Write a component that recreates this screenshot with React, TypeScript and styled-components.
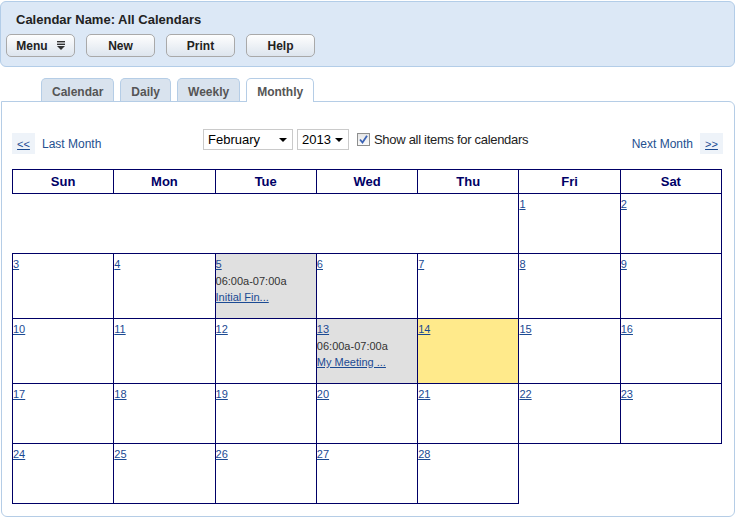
import { FC } from 'react';
import styled, { createGlobalStyle } from 'styled-components';

const GlobalStyle = createGlobalStyle`
  body {
    margin: 0;
    background: #fff;
    font-family: "Liberation Sans", Arial, sans-serif;
  }
`;

const Page = styled.div`
  width: 735px;
  padding-top: 1px;
`;

const Header = styled.div`
  border: 1px solid #b3cde8;
  border-radius: 6px;
  background: #dce8f6;
  padding: 9px 5px 9px 5px;
`;

const Title = styled.div`
  padding-left: 10px;
  font-size: 13px;
  font-weight: bold;
  line-height: 17px;
  color: #222;
`;

const ButtonRow = styled.div`
  display: flex;
  gap: 11px;
  margin-top: 6px;
`;

const Button = styled.button`
  display: flex;
  align-items: center;
  justify-content: center;
  gap: 9px;
  width: 69px;
  height: 23px;
  padding: 0;
  border: 1px solid #a9a9a9;
  border-radius: 5px;
  background: linear-gradient(#fefefe, #dde5ee);
  font-family: "Liberation Sans", Arial, sans-serif;
  font-size: 12px;
  font-weight: bold;
  color: #222;
`;

const TabRow = styled.div`
  display: flex;
  gap: 6px;
  margin-top: 11px;
  padding-left: 41px;
  position: relative;
  z-index: 1;
`;

const Tab = styled.div<{ $active?: boolean }>`
  height: ${(p) => (p.$active ? 24 : 23)}px;
  margin-bottom: ${(p) => (p.$active ? -1 : 0)}px;
  box-sizing: border-box;
  padding: 5px 10px 0;
  border: 1px solid #b5cde6;
  border-bottom: none;
  border-radius: 5px 5px 0 0;
  background: ${(p) => (p.$active ? '#fff' : '#d9e3ee')};
  font-size: 12px;
  font-weight: bold;
  line-height: 16px;
  color: #555;
`;

const Panel = styled.div`
  margin-left: 1px;
  border: 1px solid #b5cde6;
  border-radius: 0 6px 6px 6px;
  padding: 27px 11px 12px 10px;
`;

const NavRow = styled.div`
  display: grid;
  grid-template-columns: 191px auto 1fr;
  align-items: start;
  height: 24px;
`;

const NavSide = styled.div<{ $right?: boolean }>`
  display: flex;
  align-items: center;
  justify-content: ${(p) => (p.$right ? 'flex-end' : 'flex-start')};
  gap: 7px;
  margin-top: 4px;
`;

const ArrowBox = styled.a`
  display: flex;
  align-items: center;
  justify-content: center;
  width: 23px;
  height: 21px;
  background: #eef3f9;
  font-size: 11px;
  color: #1b4a93;
  text-decoration: underline;
`;

const NavLink = styled.span`
  font-size: 12px;
  color: #24508f;
`;

const Filters = styled.div`
  display: flex;
  align-items: center;
  gap: 4px;
`;

const SelectWrap = styled.div`
  position: relative;
`;

const Select = styled.select<{ $width: number }>`
  appearance: none;
  width: ${(p) => p.$width}px;
  height: 21px;
  padding: 0 0 0 4px;
  border: 1px solid #cacaca;
  border-radius: 0;
  background: #fff;
  font-family: "Liberation Sans", Arial, sans-serif;
  font-size: 13px;
  color: #000;
`;

const SelectArrow = styled.span`
  position: absolute;
  right: 6px;
  top: 9px;
  width: 0;
  height: 0;
  border-left: 4px solid transparent;
  border-right: 4px solid transparent;
  border-top: 4px solid #000;
  pointer-events: none;
`;

const Check = styled.span`
  display: flex;
  align-items: center;
  justify-content: center;
  width: 13px;
  height: 13px;
  box-sizing: border-box;
  margin-left: 4px;
  border: 1px solid #8e8f8f;
  background: linear-gradient(#e6e6e6, #fafafa);
`;

const CheckLabel = styled.span`
  font-size: 13px;
  letter-spacing: -0.3px;
  color: #222;
`;

const Table = styled.table`
  width: 710px;
  margin-top: 16px;
  border-collapse: collapse;
  table-layout: fixed;
`;

const HeadCell = styled.th`
  height: 23px;
  padding: 0;
  border: 1px solid #000066;
  font-size: 13px;
  font-weight: bold;
  color: #000066;
  text-align: center;
`;

const DayCell = styled.td<{ $bg?: string; $empty?: boolean }>`
  height: 56px;
  padding: 3px 1px 0 0;
  vertical-align: top;
  border: ${(p) => (p.$empty ? 'none' : '1px solid #000066')};
  background: ${(p) => p.$bg ?? 'transparent'};
  font-size: 11px;
  line-height: 15px;
`;

const DayNum = styled.a`
  display: block;
  color: #1b4a93;
  text-decoration: underline;
`;

const Event = styled.div`
  padding-top: 1px;
  padding-bottom: 13px;
  line-height: 16px;
`;

const EventTime = styled.div`
  color: #333;
`;

const EventLink = styled.a`
  color: #1b4a93;
  text-decoration: underline;
`;

const MenuIcon: FC = () => (
  <svg width="8" height="9" viewBox="0 0 8 9">
    <rect x="0" y="0" width="8" height="1.4" fill="#333" />
    <rect x="0" y="2.6" width="8" height="1.4" fill="#333" />
    <path d="M0 5 L8 5 L4 9 Z" fill="#333" />
  </svg>
);

interface Day {
  day: number;
  time?: string;
  title?: string;
}

const today = 14;
const days: Day[] = Array.from({ length: 28 }, (_, i) => ({ day: i + 1 }));
days[4] = { day: 5, time: '06:00a-07:00a', title: 'Initial Fin...' };
days[12] = { day: 13, time: '06:00a-07:00a', title: 'My Meeting ...' };

const cells: (Day | null)[] = [...Array(5).fill(null), ...days];
while (cells.length % 7) cells.push(null);
const weeks: (Day | null)[][] = [];
for (let i = 0; i < cells.length; i += 7) weeks.push(cells.slice(i, i + 7));

const weekDays = ['Sun', 'Mon', 'Tue', 'Wed', 'Thu', 'Fri', 'Sat'];

const App: FC = () => {
  return (
    <Page>
      <GlobalStyle />
      <Header>
        <Title>Calendar Name: All Calendars</Title>
        <ButtonRow>
          <Button>
            Menu <MenuIcon />
          </Button>
          <Button>New</Button>
          <Button>Print</Button>
          <Button>Help</Button>
        </ButtonRow>
      </Header>

      <TabRow>
        <Tab>Calendar</Tab>
        <Tab>Daily</Tab>
        <Tab>Weekly</Tab>
        <Tab $active>Monthly</Tab>
      </TabRow>

      <Panel>
        <NavRow>
          <NavSide>
            <ArrowBox>&lt;&lt;</ArrowBox>
            <NavLink>Last Month</NavLink>
          </NavSide>
          <Filters>
            <SelectWrap>
              <Select $width={90} defaultValue="February">
                <option>January</option>
                <option>February</option>
                <option>March</option>
              </Select>
              <SelectArrow />
            </SelectWrap>
            <SelectWrap>
              <Select $width={52} defaultValue="2013">
                <option>2012</option>
                <option>2013</option>
                <option>2014</option>
              </Select>
              <SelectArrow />
            </SelectWrap>
            <Check>
              <svg width="9" height="9" viewBox="0 0 9 9">
                <path d="M1 4.5 L3.5 7.5 L8 0.8" stroke="#3b63b5" strokeWidth="1.8" fill="none" />
              </svg>
            </Check>
            <CheckLabel>Show all items for calendars</CheckLabel>
          </Filters>
          <NavSide $right>
            <NavLink>Next Month</NavLink>
            <ArrowBox>&gt;&gt;</ArrowBox>
          </NavSide>
        </NavRow>

        <Table>
          <thead>
            <tr>
              {weekDays.map((d) => (
                <HeadCell key={d}>{d}</HeadCell>
              ))}
            </tr>
          </thead>
          <tbody>
            {weeks.map((week, w) => (
              <tr key={w}>
                {week.map((cell, i) =>
                  cell ? (
                    <DayCell
                      key={i}
                      $bg={cell.day === today ? '#ffea8b' : cell.time ? '#e0e0e0' : undefined}
                    >
                      <DayNum>{cell.day}</DayNum>
                      {cell.time && (
                        <Event>
                          <EventTime>{cell.time}</EventTime>
                          <EventLink>{cell.title}</EventLink>
                        </Event>
                      )}
                    </DayCell>
                  ) : (
                    <DayCell key={i} $empty />
                  )
                )}
              </tr>
            ))}
          </tbody>
        </Table>
      </Panel>
    </Page>
  );
};

export default App;
